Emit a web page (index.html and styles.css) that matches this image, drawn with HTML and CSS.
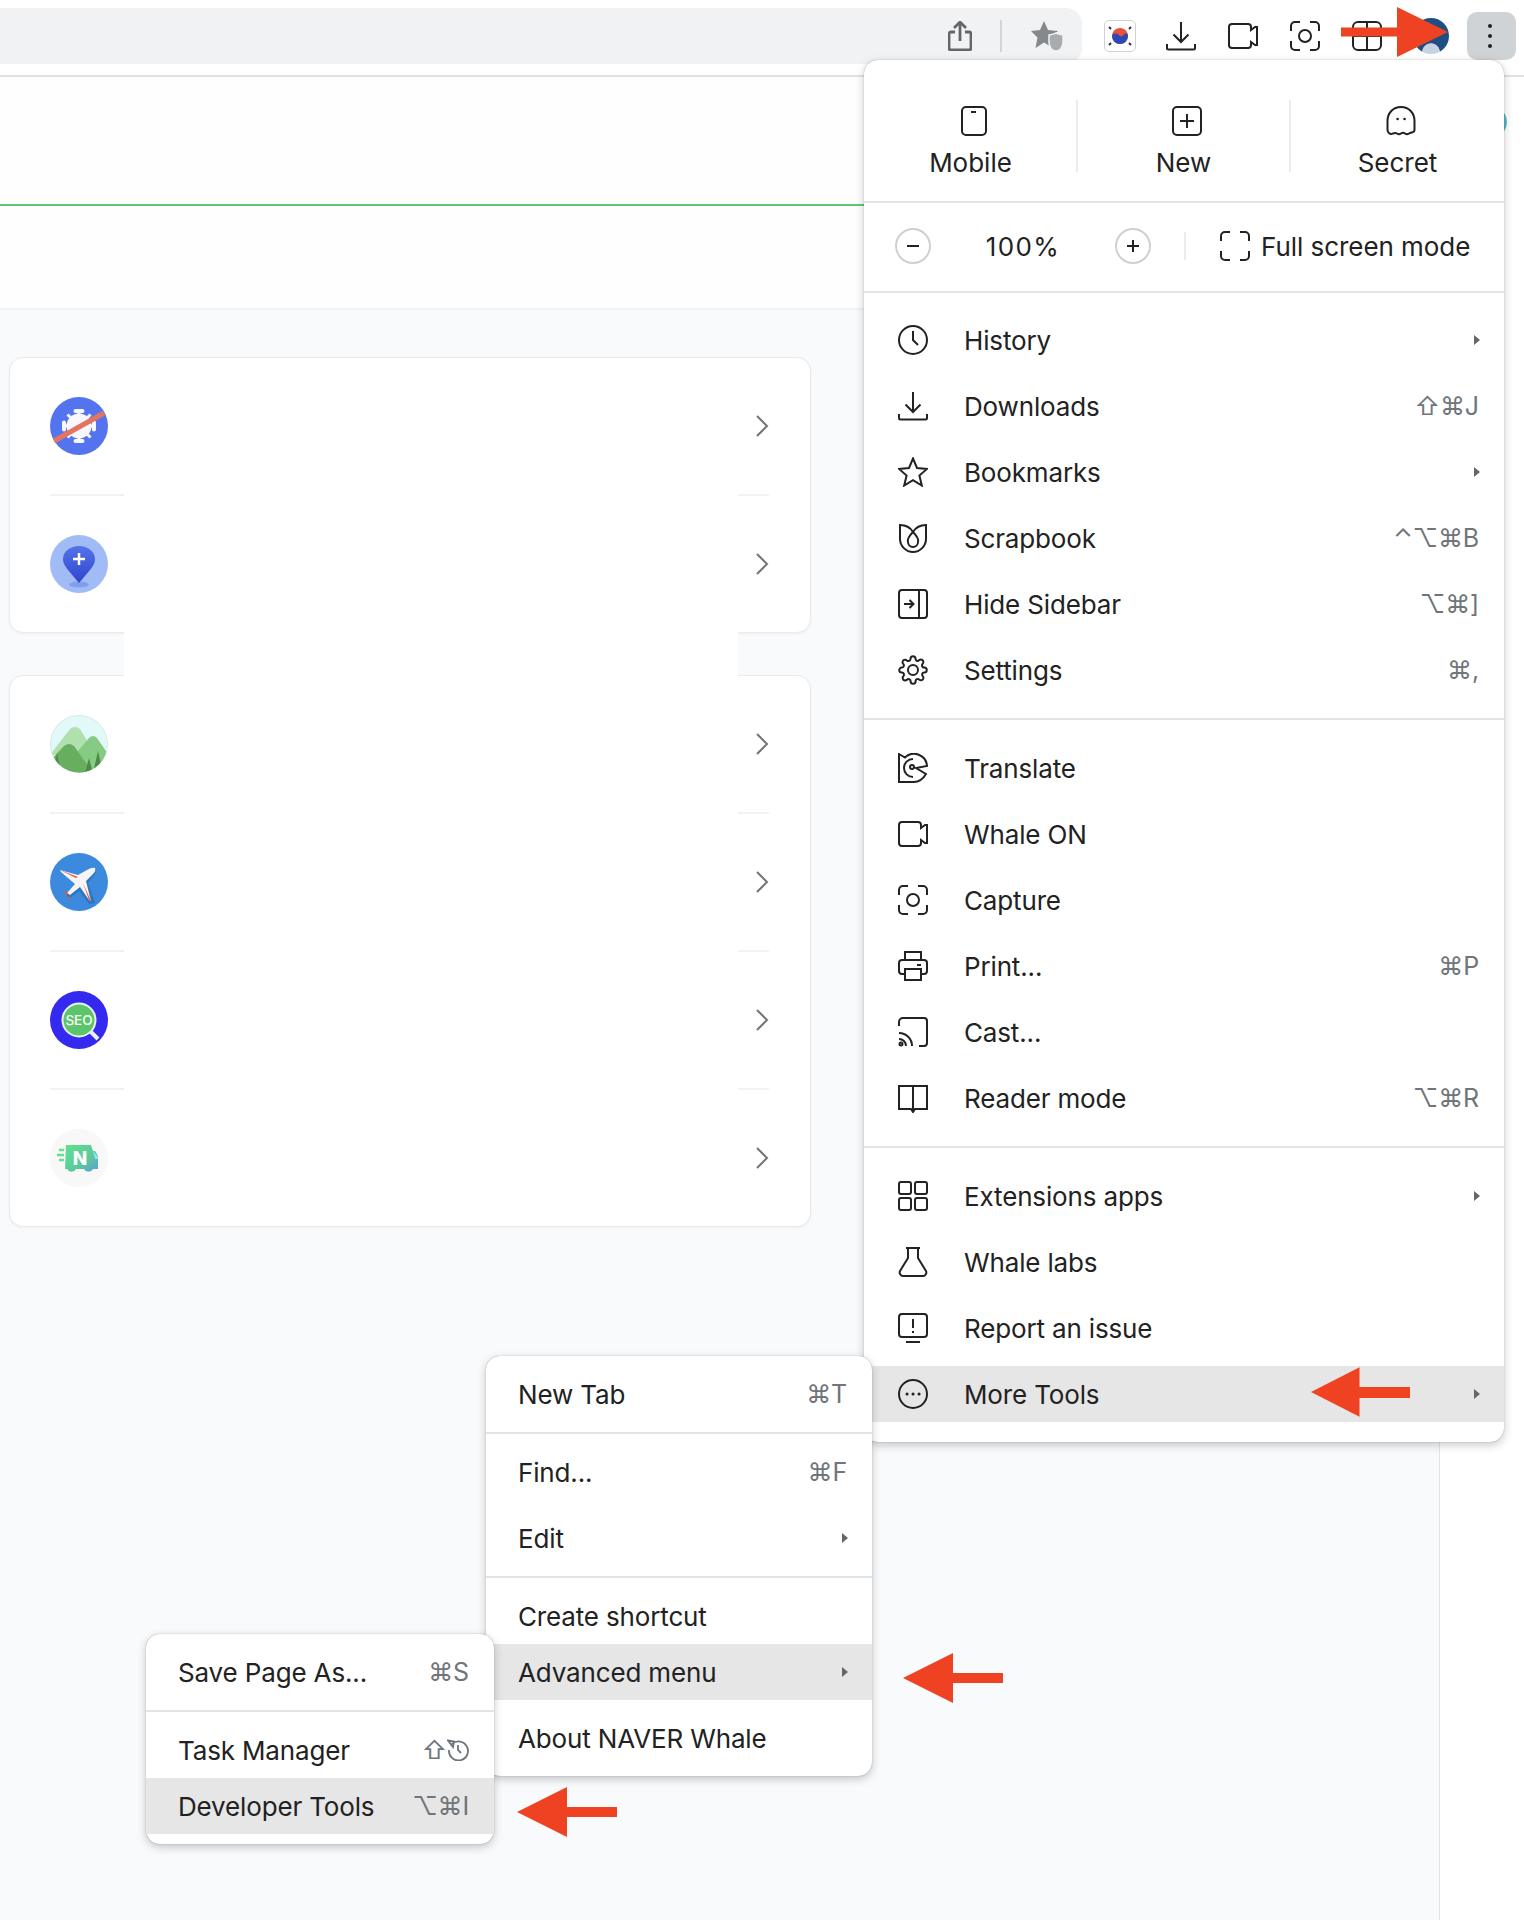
FILE: index.html
```html
<!DOCTYPE html>
<html lang="en">

<head>
    <meta charset="UTF-8">
    <meta name="viewport" content="width=device-width, initial-scale=1.0">
    <title>NAVER Whale menu</title>
    <link rel="stylesheet" href="styles.css">
</head>

<body>
    <!-- icon set -->
    <svg class="defs" width="0" height="0">
        <symbol id="i-clock" viewBox="0 0 30 30"><circle cx="15" cy="15" r="14" /><path d="M15 6v9l5 5" /></symbol>
        <symbol id="i-down" viewBox="0 0 30 30"><path d="M15 1v20M7.500 13.500 15 21l7.500-7.500M1 23v4a1.500 1.500 0 0 0 1.500 1.500h25A1.500 1.500 0 0 0 29 27v-4" /></symbol>
        <symbol id="i-star" viewBox="0 0 30 30"><path d="M15 1.500l4 9.500 10 .9-7.600 6.700 2.400 9.900-8.800-5.300-8.800 5.300 2.400-9.900L1 11.900l10-.9z" /></symbol>
        <symbol id="i-scrap" viewBox="0 0 30 30"><path d="M2 2c5 0 10 2 13 7 3-5 8-7 13-7v14c0 7-6 13-13 13S2 23 2 16z" /><path d="M15 9c-4 4-6 7-5 10a5 5 0 0 0 10 0c1-3-1-6-5-10z" /></symbol>
        <symbol id="i-side" viewBox="0 0 30 30"><rect x="1" y="1" width="28" height="28" rx="3" /><path d="M21 1v28M6 15h9M11.500 11l4 4-4 4" /></symbol>
        <symbol id="i-gear" viewBox="0 0 30 30"><circle cx="15" cy="15" r="5" /><path transform="scale(1.25)" stroke-width="1.600" d="M19.400 15a1.650 1.650 0 0 0 .33 1.820l.06.06a2 2 0 0 1 0 2.830 2 2 0 0 1-2.830 0l-.06-.06a1.650 1.650 0 0 0-1.820-.33 1.650 1.650 0 0 0-1 1.510V21a2 2 0 0 1-2 2 2 2 0 0 1-2-2v-.09A1.650 1.650 0 0 0 9 19.400a1.650 1.650 0 0 0-1.820.33l-.06.06a2 2 0 0 1-2.830 0 2 2 0 0 1 0-2.830l.06-.06a1.650 1.650 0 0 0 .33-1.820 1.650 1.650 0 0 0-1.510-1H3a2 2 0 0 1-2-2 2 2 0 0 1 2-2h.09A1.650 1.650 0 0 0 4.600 9a1.650 1.650 0 0 0-.33-1.820l-.06-.06a2 2 0 0 1 0-2.830 2 2 0 0 1 2.830 0l.06.06a1.650 1.650 0 0 0 1.820.33H9a1.650 1.650 0 0 0 1-1.510V3a2 2 0 0 1 2-2 2 2 0 0 1 2 2v.09a1.650 1.650 0 0 0 1 1.510 1.650 1.650 0 0 0 1.820-.33l.06-.06a2 2 0 0 1 2.830 0 2 2 0 0 1 0 2.830l-.06.06a1.650 1.650 0 0 0-.33 1.820V9a1.650 1.650 0 0 0 1.510 1H21a2 2 0 0 1 2 2 2 2 0 0 1-2 2h-.09a1.650 1.650 0 0 0-1.510 1z" /></symbol>
        <symbol id="i-translate" viewBox="0 0 30 30"><path d="M1 1l6 3.500A13 13 0 0 1 29 13l-11 2 10 6c-3 5-7 8-12 8H1z" /><path d="M15 6a9 9 0 0 0 0 18" /><circle cx="14" cy="14" r="2" /></symbol>
        <symbol id="i-video" viewBox="0 0 30 30"><path d="M4 3h16a3 3 0 0 1 3 3v3l4-3h2v18h-2l-4-3v3a3 3 0 0 1-3 3H4a3 3 0 0 1-3-3V6a3 3 0 0 1 3-3z" /></symbol>
        <symbol id="i-capture" viewBox="0 0 30 30"><circle cx="15" cy="15" r="6" /><path d="M10 1H5a4 4 0 0 0-4 4v5M20 1h5a4 4 0 0 1 4 4v5M29 20v5a4 4 0 0 1-4 4h-5M10 29H5a4 4 0 0 1-4-4v-5" /></symbol>
        <symbol id="i-print" viewBox="0 0 30 30"><path d="M7 9V1h16v8M7 23H4a3 3 0 0 1-3-3v-8a3 3 0 0 1 3-3h22a3 3 0 0 1 3 3v8a3 3 0 0 1-3 3h-3M19 14h4" /><rect x="7" y="18" width="16" height="11" /></symbol>
        <symbol id="i-cast" viewBox="0 0 30 30"><path d="M1 9V5a4 4 0 0 1 4-4h21a3 3 0 0 1 3 3v22a3 3 0 0 1-3 3h-5M1 16a13 13 0 0 1 13 13M1 22a7 7 0 0 1 7 7" /><circle cx="3" cy="27" r="1.500" /></symbol>
        <symbol id="i-book" viewBox="0 0 30 30"><path d="M15 3H1v23h12l2 3 2-3h12V3zM15 3v26" /></symbol>
        <symbol id="i-apps" viewBox="0 0 30 30"><rect x="1" y="1" width="12" height="12" rx="2" /><rect x="17" y="1" width="12" height="12" rx="2" /><rect x="1" y="17" width="12" height="12" rx="2" /><rect x="17" y="17" width="12" height="12" rx="2" /></symbol>
        <symbol id="i-flask" viewBox="0 0 30 30"><path d="M8 1h14M10 1v10L2 24c-1 2 .5 5 3 5h20c2.500 0 4-3 3-5l-8-13V1" /></symbol>
        <symbol id="i-report" viewBox="0 0 30 30"><rect x="1" y="1" width="28" height="23" rx="3" /><path d="M15 6v9M15 18v2M8 29h14" /></symbol>
        <symbol id="i-more" viewBox="0 0 30 30"><circle cx="15" cy="15" r="14" /><path d="M9 15h.1M15 15h.1M21 15h.1" stroke-width="3" stroke-linecap="round" /></symbol>
        <symbol id="i-mobile" viewBox="0 0 30 30"><rect x="3" y="1" width="24" height="28" rx="4" /><path d="M12 6h5" /></symbol>
        <symbol id="i-new" viewBox="0 0 30 30"><rect x="1" y="1" width="28" height="28" rx="4" /><path d="M15 8v14M8 15h14" /></symbol>
        <symbol id="i-ghost" viewBox="0 0 30 30"><path d="M15 1C7 1 1.500 7 1.500 15v9c0 3 3 5 5.500 3.500 2-1 2.500-1 4 0s2.500 1 4 0 2.500-1 4 0 2.500 1 4 0c2.500-1.500 5.500-.5 5.500-3.500v-9C28.500 7 23 1 15 1z" /><path d="M11.500 13h.1M18.500 13h.1" stroke-width="2.500" stroke-linecap="round" /></symbol>
        <symbol id="i-full" viewBox="0 0 30 30"><path d="M10 1H5a4 4 0 0 0-4 4v5M20 1h5a4 4 0 0 1 4 4v5M29 20v5a4 4 0 0 1-4 4h-5M10 29H5a4 4 0 0 1-4-4v-5" /></symbol>
    </svg>

    <div class="toolbar">
        <div class="address">
            <svg class="addr-ico" viewBox="0 0 24 30"><path d="M7 11H3a2 2 0 0 0-2 2v14a2 2 0 0 0 2 2h18a2 2 0 0 0 2-2V13a2 2 0 0 0-2-2h-4M12 20V2M6 7l6-6 6 6" /></svg>
            <span class="addr-sep"></span>
            <svg class="addr-star" viewBox="0 0 34 30"><path d="M13 0l4 9 10 1-7.500 6.500L22 27l-9-5.500L4.500 27 6.500 16.500 0 10l9-1z" /><path class="star-shield" d="M18 14c3 0 4-1 7-2 3 1 4 2 7 2v7c0 5-3 9-7 9s-7-4-7-9z" /></svg>
        </div>
        <div class="tools">
            <span class="flag">
                <svg width="24" height="24" viewBox="0 0 24 24">
                    <circle cx="12" cy="12" r="8" fill="#e8513f" />
                    <path d="M4 12a8 8 0 0 0 16 0c0-3-3-3-4-1.500S13 13 12 12s-3-3-5-2.500S4 11 4 12z" fill="#2a49b5" />
                    <path d="M1 3l2 2M21 5l2-2M1 21l2-2M21 19l2 2" stroke="#333" stroke-width="2" />
                </svg>
            </span>
            <svg class="ico tool"><use href="#i-down" /></svg>
            <svg class="ico tool"><use href="#i-video" /></svg>
            <svg class="ico tool"><use href="#i-capture" /></svg>
            <svg class="ico tool" viewBox="0 0 30 30"><rect x="1" y="1" width="28" height="28" rx="5" /><path d="M15 1v28M1 15h28" /></svg>
            <span class="avatar"></span>
            <button class="kebab"><i></i><i></i><i></i></button>
        </div>
    </div>

    <div class="page">
        <div class="main">
            <div class="nav"></div>
            <div class="subnav"></div>
            <div class="list">
                <div class="card">
                    <div class="card-row">
                        <svg class="app" viewBox="0 0 58 58">
                            <circle cx="29" cy="29" r="29" fill="#5474ef" />
                            <circle cx="29" cy="29" r="12.500" fill="#f7f8fe" />
                            <path d="M29 13v32M13 29h32M17.500 17.500l23 23M40.500 17.500l-23 23" stroke="#f7f8fe" stroke-width="3" />
                            <path d="M25.500 14h7M25.500 44h7M14 25.500v7M44 25.500v7" stroke="#f7f8fe" stroke-width="4" stroke-linecap="round" />
                            <path d="M4 44 54 16" stroke="#e5735f" stroke-width="5" />
                        </svg>
                        <svg class="chev" viewBox="0 0 14 24"><path d="M2 2l10 10L2 22" /></svg>
                    </div>
                    <div class="card-row">
                        <svg class="app" viewBox="0 0 58 58">
                            <defs><linearGradient id="pin" x1="0" y1="0" x2="0" y2="1"><stop offset="0" stop-color="#5474ea" /><stop offset="1" stop-color="#2f45cc" /></linearGradient></defs>
                            <circle cx="29" cy="29" r="29" fill="#a0bbf6" />
                            <ellipse cx="29" cy="49.500" rx="10" ry="3" fill="#7f9eee" />
                            <path d="M29 48 18 35c-4-5-5-8-5-11a16 13 0 0 1 32 0c0 3-1 6-5 11z" fill="url(#pin)" />
                            <path d="M29 18v12M23 24h12" stroke="#fff" stroke-width="2.500" />
                        </svg>
                        <svg class="chev" viewBox="0 0 14 24"><path d="M2 2l10 10L2 22" /></svg>
                    </div>
                </div>

                <div class="card">
                    <div class="card-row">
                        <svg class="app" viewBox="0 0 58 58">
                            <defs><clipPath id="round"><circle cx="29" cy="29" r="28.500" /></clipPath></defs>
                            <circle cx="29" cy="29" r="28.500" fill="#e2f9f9" stroke="#d4ebe6" />
                            <g clip-path="url(#round)">
                                <path d="M0 40 20 14q5-4 10 0l16 26z" fill="#b0e0ae" />
                                <path d="M28 36 39 23q4-4 8 0l13 19v18H28z" fill="#86cb84" />
                                <path d="M0 62V46L14 31q5-4 10 0l22 31z" fill="#67af5e" />
                                <path d="M7 38 3 58h8zM39 43l-4 15h8zM48 36l-5 22h10z" fill="#4d8a4c" />
                            </g>
                        </svg>
                        <svg class="chev" viewBox="0 0 14 24"><path d="M2 2l10 10L2 22" /></svg>
                    </div>
                    <div class="card-row">
                        <svg class="app" viewBox="0 0 58 58">
                            <circle cx="29" cy="29" r="29" fill="#3b8ade" />
                            <path d="M47 18 38 30l7 20-6 1-10-13-9 7-4-3 8-9z" fill="#2e74bf" />
                            <path d="M45 15q1 3-2 6l-7 7 5 20-2-1-9-13-10 8-3-2 8-9-14-12-1-2 18 5 9-5q5-3 8-2z" fill="#f5f5f7" />
                            <path d="M10 17l18 7-2 1zM33 30l8 18-2-1zM12 37l6 3-1 2zM19 41l2 5-2 0z" fill="#e9552f" />
                        </svg>
                        <svg class="chev" viewBox="0 0 14 24"><path d="M2 2l10 10L2 22" /></svg>
                    </div>
                    <div class="card-row">
                        <svg class="app" viewBox="0 0 58 58">
                            <circle cx="29" cy="29" r="29" fill="#3429ee" />
                            <circle cx="29" cy="29" r="16.500" fill="#5bc569" stroke="#e8f1f6" stroke-width="2" />
                            <path d="M41 41l7 7" stroke="#e8f1f6" stroke-width="4" />
                            <text class="seo" x="29" y="34" text-anchor="middle">SEO</text>
                        </svg>
                        <svg class="chev" viewBox="0 0 14 24"><path d="M2 2l10 10L2 22" /></svg>
                    </div>
                    <div class="card-row">
                        <svg class="app" viewBox="0 0 58 58">
                            <defs><linearGradient id="van" x1="0" y1="0" x2="1" y2="1"><stop offset="0" stop-color="#5fe08f" /><stop offset=".6" stop-color="#5cc99b" /><stop offset="1" stop-color="#5a9fd8" /></linearGradient></defs>
                            <circle cx="29" cy="29" r="29" fill="#f8f8f9" />
                            <path d="M16 16h25l2 6h2l3 5v13h-5a5 5 0 0 1-9 0H26a5 5 0 0 1-9 0h-2z" fill="url(#van)" />
                            <path d="M7 26h7M9 21h5M9 31h5" stroke="#62e095" stroke-width="2.500" />
                            <path d="M43 22l5 6v2h-3z" fill="#8fe3f5" />
                            <text class="van-n" x="30" y="36" text-anchor="middle">N</text>
                        </svg>
                        <svg class="chev" viewBox="0 0 14 24"><path d="M2 2l10 10L2 22" /></svg>
                    </div>
                </div>
            </div>
            <!-- blanked out area of the original capture -->
            <div class="blank"></div>
        </div>
        <div class="side"></div>
    </div>

    <span class="teal"></span>

    <div class="menu menu-main">
        <div class="launch">
            <div class="launch-item"><svg class="ico"><use href="#i-mobile" /></svg><span>Mobile</span></div>
            <div class="launch-item"><svg class="ico"><use href="#i-new" /></svg><span>New</span></div>
            <div class="launch-item"><svg class="ico"><use href="#i-ghost" /></svg><span>Secret</span></div>
        </div>
        <div class="zoom">
            <span class="round"><svg viewBox="0 0 16 16"><path d="M2 8h12" /></svg></span>
            <span class="zoom-val">100%</span>
            <span class="round"><svg viewBox="0 0 16 16"><path d="M2 8h12M8 2v12" /></svg></span>
            <span class="zoom-sep"></span>
            <svg class="ico"><use href="#i-full" /></svg>
            <span class="zoom-full">Full screen mode</span>
        </div>
        <div class="section sec-a">
            <div class="row"><svg class="ico"><use href="#i-clock" /></svg><span>History</span><i class="sub"></i></div>
            <div class="row"><svg class="ico"><use href="#i-down" /></svg><span>Downloads</span><em>⇧⌘J</em></div>
            <div class="row"><svg class="ico"><use href="#i-star" /></svg><span>Bookmarks</span><i class="sub"></i></div>
            <div class="row"><svg class="ico"><use href="#i-scrap" /></svg><span>Scrapbook</span><em>⌃⌥⌘B</em></div>
            <div class="row"><svg class="ico"><use href="#i-side" /></svg><span>Hide Sidebar</span><em>⌥⌘]</em></div>
            <div class="row"><svg class="ico"><use href="#i-gear" /></svg><span>Settings</span><em>⌘,</em></div>
        </div>
        <div class="section sec-b">
            <div class="row"><svg class="ico"><use href="#i-translate" /></svg><span>Translate</span></div>
            <div class="row"><svg class="ico"><use href="#i-video" /></svg><span>Whale ON</span></div>
            <div class="row"><svg class="ico"><use href="#i-capture" /></svg><span>Capture</span></div>
            <div class="row"><svg class="ico"><use href="#i-print" /></svg><span>Print...</span><em>⌘P</em></div>
            <div class="row"><svg class="ico"><use href="#i-cast" /></svg><span>Cast...</span></div>
            <div class="row"><svg class="ico"><use href="#i-book" /></svg><span>Reader mode</span><em>⌥⌘R</em></div>
        </div>
        <div class="section sec-c">
            <div class="row"><svg class="ico"><use href="#i-apps" /></svg><span>Extensions apps</span><i class="sub"></i></div>
            <div class="row"><svg class="ico"><use href="#i-flask" /></svg><span>Whale labs</span></div>
            <div class="row"><svg class="ico"><use href="#i-report" /></svg><span>Report an issue</span></div>
            <div class="row on"><svg class="ico"><use href="#i-more" /></svg><span>More Tools</span><i class="sub"></i></div>
        </div>
    </div>

    <div class="menu menu-tools">
        <div class="section small">
            <div class="row"><span>New Tab</span><em>⌘T</em></div>
        </div>
        <div class="section small">
            <div class="row"><span>Find...</span><em>⌘F</em></div>
            <div class="row"><span>Edit</span><i class="sub"></i></div>
        </div>
        <div class="section small">
            <div class="row tight"><span>Create shortcut</span></div>
            <div class="row on"><span>Advanced menu</span><i class="sub"></i></div>
            <div class="row"><span>About NAVER Whale</span></div>
        </div>
    </div>

    <div class="menu menu-adv">
        <div class="section small">
            <div class="row"><span>Save Page As...</span><em>⌘S</em></div>
        </div>
        <div class="section small">
            <div class="row tight"><span>Task Manager</span>
                <em>⇧<svg class="timer" viewBox="0 0 22 22"><path d="M5 5a9.500 9.500 0 1 1-3 6M11 6v5l3 3M1 1.500l6 1-1 5.500z" /></svg></em>
            </div>
            <div class="row on"><span>Developer Tools</span><em>⌥⌘I</em></div>
        </div>
    </div>

    <svg class="arrow arrow-right" viewBox="0 0 107 50"><path d="M0 20.500h56V0l51 25-51 25V29.500H0z" /></svg>
    <svg class="arrow arrow-tools" viewBox="0 0 100 50"><path d="M100 20H49V0L0 25l49 25V31h51z" /></svg>
    <svg class="arrow arrow-adv" viewBox="0 0 100 50"><path d="M100 20H50V0L0 25l50 25V30h50z" /></svg>
    <svg class="arrow arrow-dev" viewBox="0 0 100 50"><path d="M100 20H50V0L0 25l50 25V30h50z" /></svg>
</body>

</html>
```

FILE: styles.css
```css
* {
    box-sizing: border-box;
    margin: 0;
}

body {
    position: relative;
    height: 1920px;
    overflow: hidden;
    background-color: #fff;
    font-family: "Inter", "DejaVu Sans", sans-serif;
    color: #222;
}

.defs {
    position: absolute;
}

.ico {
    width: 30px;
    height: 30px;
    flex-shrink: 0;
    fill: none;
    stroke: #222;
    stroke-width: 2;
}

/* toolbar */
.toolbar {
    display: flex;
    height: 77px;
    padding-top: 8px;
    border-bottom: 2px solid #dfe2e5;
}

.address {
    display: flex;
    align-items: center;
    width: 1082px;
    height: 56px;
    padding-left: 948px;
    background-color: #f1f2f4;
    border-radius: 0 16px 16px 0;
}

.addr-ico {
    width: 24px;
    height: 30px;
    fill: none;
    stroke: #666;
    stroke-width: 2.800;
}

.addr-sep {
    width: 2px;
    height: 32px;
    margin: 0 29px 0 28px;
    background-color: #d2d4d7;
}

.addr-star {
    width: 34px;
    height: 30px;
    fill: #85888c;
}

.star-shield {
    fill: #a9acaf;
    stroke: #f1f2f4;
    stroke-width: 1.500;
}

.tools {
    display: flex;
    align-items: center;
    align-self: flex-start;
    height: 48px;
    margin-top: 4px;
    padding-left: 22px;
}

.flag {
    display: flex;
    align-items: center;
    justify-content: center;
    width: 32px;
    height: 32px;
    margin-right: 30px;
    background-color: #fff;
    border: 1px solid #cfd1d4;
    border-radius: 5px;
}

.tool {
    margin-right: 32px;
}

.avatar {
    width: 36px;
    height: 36px;
    margin-left: -1px;
    background: radial-gradient(circle at 50% 95%, #c5d3e2 0 22%, #1f4f82 24%);
    border-radius: 50%;
}

.kebab {
    display: flex;
    flex-direction: column;
    align-items: center;
    justify-content: center;
    gap: 6px;
    width: 49px;
    height: 48px;
    margin-left: 18px;
    padding: 0 3px 0 0;
    background-color: #d0d3d6;
    border: none;
    border-radius: 10px;
}

.kebab i {
    width: 4px;
    height: 4px;
    background-color: #222;
    border-radius: 50%;
}

/* page behind the menus */
.page {
    display: flex;
    height: 1843px;
}

.main {
    position: relative;
    width: 1440px;
    background-color: #f9fafc;
    border-right: 1px solid #e3e5e8;
}

.side {
    flex-grow: 1;
}

.nav {
    height: 129px;
    background-color: #fefefe;
    border-bottom: 2px solid #5cc87a;
}

.subnav {
    height: 102px;
    background-color: #fefefe;
    box-shadow: 0 1px 3px rgba(0, 0, 0, 0.06);
}

.list {
    display: flex;
    flex-direction: column;
    gap: 42px;
    padding: 49px 0 0 9px;
}

.card {
    width: 802px;
    background-color: #fff;
    border: 1px solid #e9eaee;
    border-radius: 14px;
    box-shadow: 0 1px 3px rgba(0, 0, 0, 0.05);
    padding: 0 41px 0 40px;
}

.card-row {
    display: flex;
    align-items: center;
    justify-content: space-between;
    height: 136px;
}

.card-row + .card-row {
    height: 138px;
    border-top: 2px solid #f1f2f4;
}

.app {
    width: 58px;
    height: 58px;
}

.chev {
    width: 14px;
    height: 24px;
    fill: none;
    stroke: #757575;
    stroke-width: 2;
}

.seo {
    font-size: 13.500px;
    font-weight: 500;
    fill: #fff;
}

.van-n {
    font-size: 19px;
    font-weight: 800;
    fill: #fff;
}

.blank {
    position: absolute;
    left: 124px;
    top: 400px;
    width: 614px;
    height: 620px;
    background-color: #fff;
}

.teal {
    position: absolute;
    left: 1490px;
    top: 110px;
    width: 17px;
    height: 24px;
    background-color: #5bb9c8;
    border-radius: 50%;
}

/* menus */
.menu {
    position: absolute;
    background-color: #fff;
    border-radius: 14px;
    box-shadow: 0 0 1px rgba(0, 0, 0, 0.45), 0 3px 10px rgba(0, 0, 0, 0.22);
    font-size: 26px;
    overflow: hidden;
}

.menu-main {
    left: 864px;
    top: 60px;
    width: 640px;
    height: 1382px;
}

.menu-tools {
    left: 486px;
    top: 1356px;
    width: 386px;
    height: 420px;
}

.menu-adv {
    left: 146px;
    top: 1634px;
    width: 348px;
    height: 210px;
}

.launch {
    display: flex;
    height: 143px;
    padding: 45px 0 0 1px;
    border-bottom: 2px solid #e3e4e6;
}

.launch-item {
    display: flex;
    flex-direction: column;
    align-items: center;
    gap: 11px;
    width: 214px;
    height: 72px;
    margin-top: -5px;
    padding-top: 6px;
    line-height: 32px;
    border-right: 2px solid #ececee;
}

.launch-item .ico {
    margin-left: 7px;
}

.launch-item:last-child {
    border-right: none;
}

.zoom {
    display: flex;
    align-items: center;
    height: 90px;
    padding: 0 0 2px 31px;
    border-bottom: 2px solid #e3e4e6;
}

.round {
    display: flex;
    align-items: center;
    justify-content: center;
    width: 36px;
    height: 36px;
    border: 2px solid #cdcfd2;
    border-radius: 50%;
}

.round svg {
    width: 16px;
    height: 16px;
    fill: none;
    stroke: #222;
    stroke-width: 2;
}

.zoom-val {
    width: 184px;
    text-align: center;
    letter-spacing: 1.4px;
}

.zoom-sep {
    width: 2px;
    height: 28px;
    margin: 0 34px 0 33px;
    background-color: #ececee;
}

.zoom-full {
    margin-left: 11px;
    letter-spacing: -0.05px;
}

.section {
    display: flex;
    flex-direction: column;
    gap: 10px;
    padding: 20px 0;
    border-bottom: 2px solid #e3e4e6;
}

.section:last-child {
    border-bottom: none;
}

.sec-a {
    padding: 19px 0 20px;
}

.sec-b {
    padding: 20px 0;
}

.sec-c {
    padding: 20px 0 19px;
}

.section.small {
    padding: 10px 0;
}

.row {
    display: flex;
    align-items: center;
    height: 56px;
    padding: 0 25px 0 32px;
    letter-spacing: -0.15px;
}

.row > span {
    flex-grow: 1;
}

.row > .ico {
    margin-left: 2px;
}

.row > .ico + span {
    margin-left: 36px;
}

.row.tight {
    margin-bottom: -10px;
}

.row.on {
    background-color: #e6e6e6;
}

.row em {
    display: flex;
    align-items: center;
    font-style: normal;
    color: #70757a;
    font-size: 25px;
}

.sub {
    width: 0;
    height: 0;
    margin-right: -1px;
    border-left: 6px solid #666;
    border-top: 5px solid transparent;
    border-bottom: 5px solid transparent;
}

.timer {
    width: 22px;
    height: 22px;
    fill: none;
    stroke: #70757a;
    stroke-width: 1.800;
}

/* red callout arrows */
.arrow {
    position: absolute;
    fill: #ee4223;
}

.arrow-right {
    left: 1341px;
    top: 7px;
    width: 107px;
    height: 50px;
}

.arrow-tools {
    left: 1311px;
    top: 1367px;
    width: 99px;
    height: 50px;
}

.arrow-adv {
    left: 903px;
    top: 1653px;
    width: 100px;
    height: 50px;
}

.arrow-dev {
    left: 517px;
    top: 1787px;
    width: 100px;
    height: 50px;
}
```
